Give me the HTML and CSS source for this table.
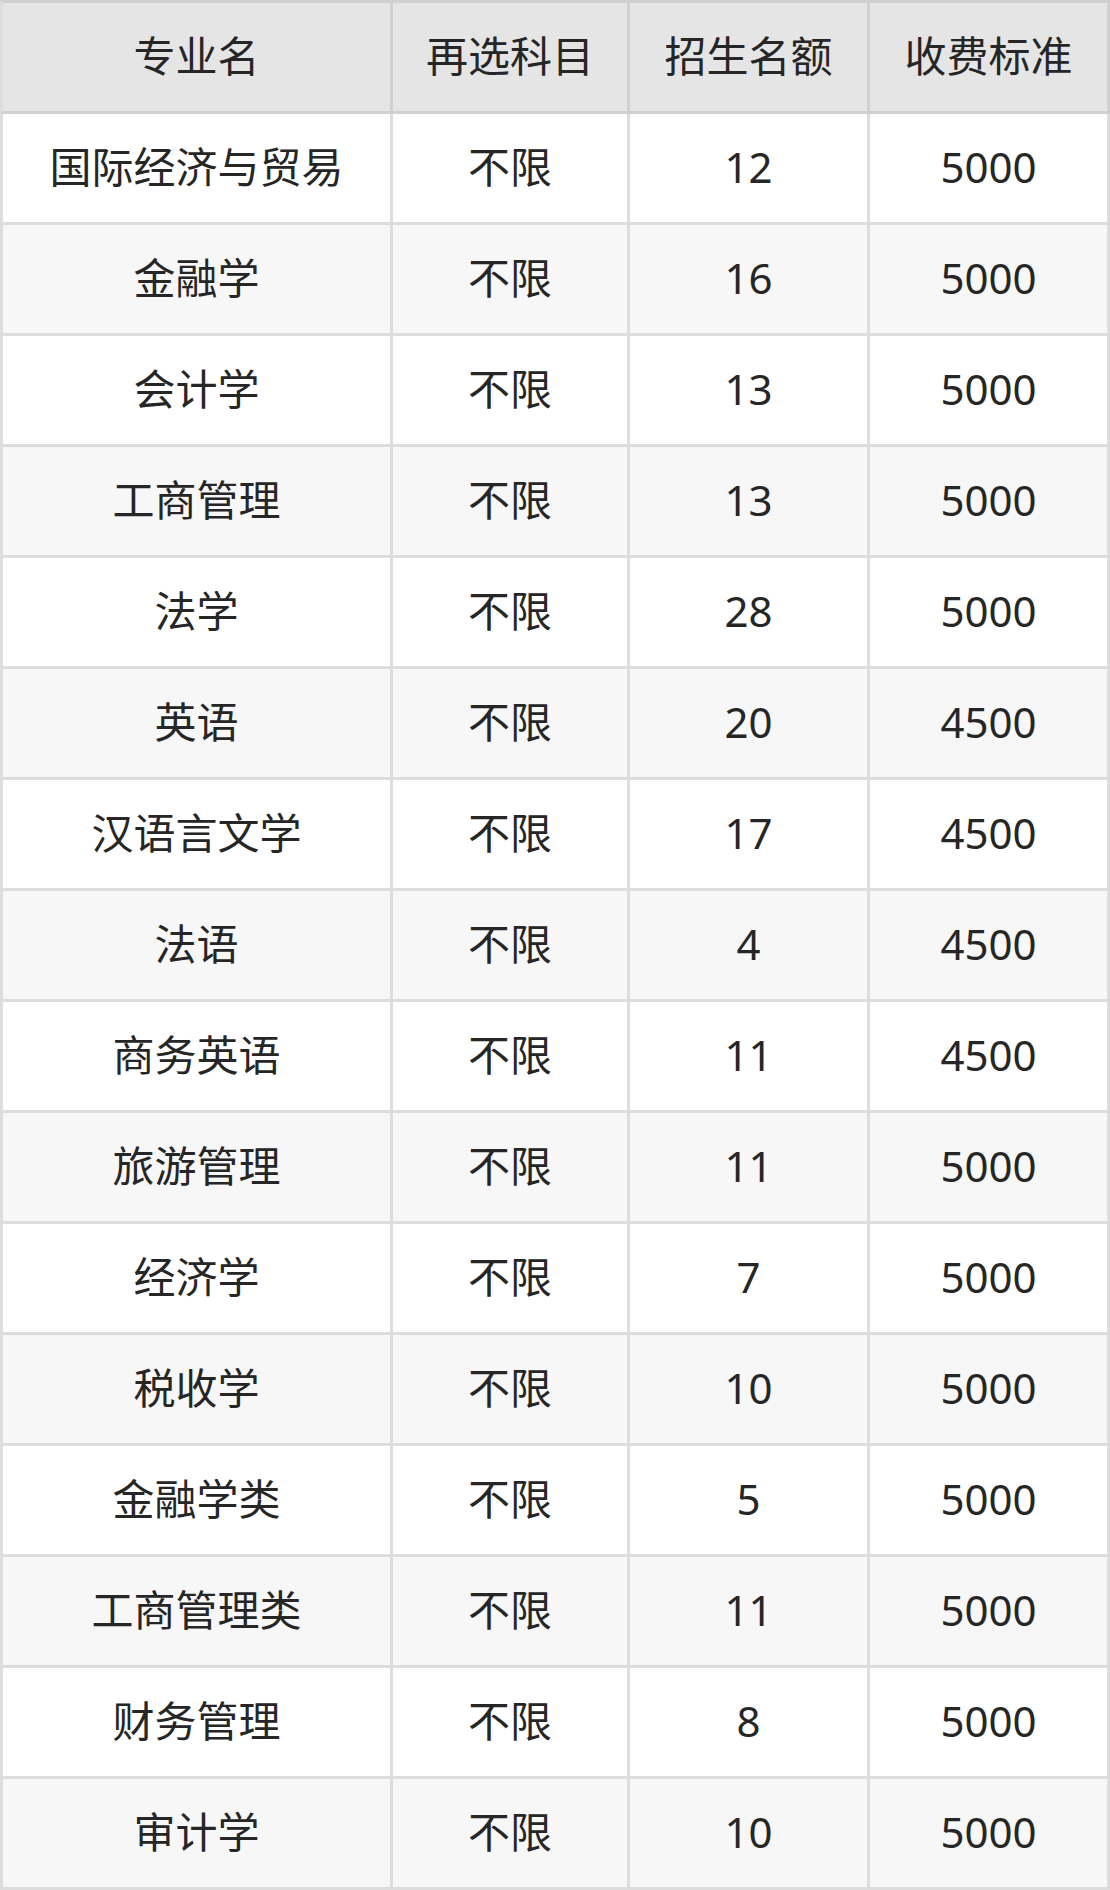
FILE: index.html
```html
<!DOCTYPE html>
<html lang="zh-CN">
<head>
<meta charset="utf-8">
<title>专业招生计划</title>
<link rel="stylesheet" href="styles.css">
</head>
<body>
<table class="plan">
  <colgroup>
    <col class="c1"><col class="c2"><col class="c3"><col class="c4">
  </colgroup>
  <thead>
    <tr><th>专业名</th><th>再选科目</th><th>招生名额</th><th>收费标准</th></tr>
  </thead>
  <tbody>
    <tr><td>国际经济与贸易</td><td>不限</td><td>12</td><td>5000</td></tr>
    <tr><td>金融学</td><td>不限</td><td>16</td><td>5000</td></tr>
    <tr><td>会计学</td><td>不限</td><td>13</td><td>5000</td></tr>
    <tr><td>工商管理</td><td>不限</td><td>13</td><td>5000</td></tr>
    <tr><td>法学</td><td>不限</td><td>28</td><td>5000</td></tr>
    <tr><td>英语</td><td>不限</td><td>20</td><td>4500</td></tr>
    <tr><td>汉语言文学</td><td>不限</td><td>17</td><td>4500</td></tr>
    <tr><td>法语</td><td>不限</td><td>4</td><td>4500</td></tr>
    <tr><td>商务英语</td><td>不限</td><td>11</td><td>4500</td></tr>
    <tr><td>旅游管理</td><td>不限</td><td>11</td><td>5000</td></tr>
    <tr><td>经济学</td><td>不限</td><td>7</td><td>5000</td></tr>
    <tr><td>税收学</td><td>不限</td><td>10</td><td>5000</td></tr>
    <tr><td>金融学类</td><td>不限</td><td>5</td><td>5000</td></tr>
    <tr><td>工商管理类</td><td>不限</td><td>11</td><td>5000</td></tr>
    <tr><td>财务管理</td><td>不限</td><td>8</td><td>5000</td></tr>
    <tr><td>审计学</td><td>不限</td><td>10</td><td>5000</td></tr>
  </tbody>
</table>
</body>
</html>
```
FILE: styles.css
```css
html, body {
  margin: 0;
  padding: 0;
  background: #ffffff;
}
.plan {
  width: 1110px;
  table-layout: fixed;
  border-collapse: separate;
  border-spacing: 0;
  font-family: "Noto Sans", "Noto Sans CJK SC", sans-serif;
  font-size: 42px;
  color: #262626;
}
.c1 { width: 393px; }
.c2 { width: 237px; }
.c3 { width: 240px; }
.c4 { width: 240px; }
.plan th,
.plan td {
  box-sizing: border-box;
  height: 111px;
  padding: 0 0 2px 0;
  text-align: center;
  vertical-align: middle;
  font-weight: normal;
  line-height: 1;
  border-right: 3px solid #dddddd;
  border-bottom: 3px solid #dddddd;
}
.plan th:first-child,
.plan td:first-child {
  border-left: 3px solid #dddddd;
}
.plan thead th {
  background: #e5e5e5;
  border-color: #d0d0d0;
  border-top: 3px solid #d0d0d0;
  height: 114px;
}
.plan tbody tr:nth-child(odd) td { background: #ffffff; }
.plan tbody tr:nth-child(even) td { background: #f7f7f7; }
```
